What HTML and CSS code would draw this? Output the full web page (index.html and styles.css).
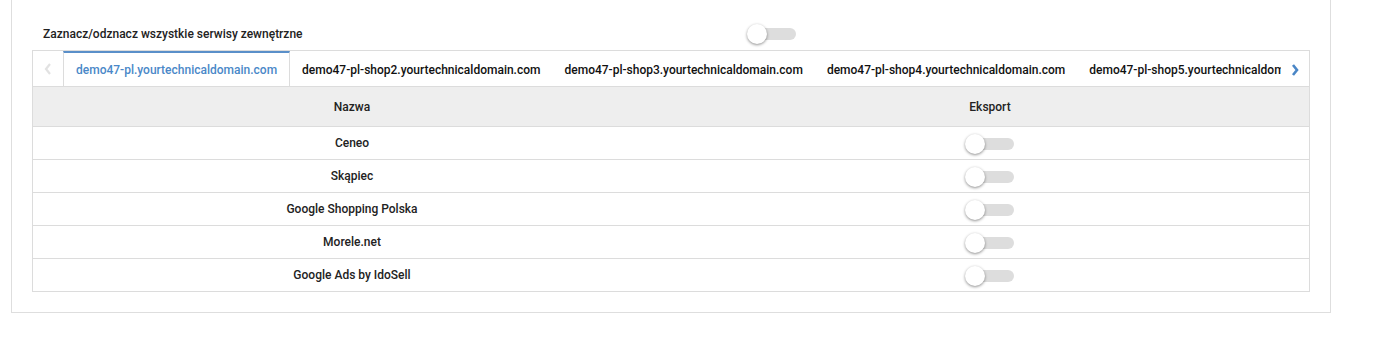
FILE: index.html
```html
<!DOCTYPE html>
<html lang="pl">
<head>
  <meta charset="UTF-8">
  <meta name="viewport" content="width=device-width, initial-scale=1.0">
  <title>Serwisy zewnętrzne</title>
  <link rel="stylesheet" href="styles.css">
</head>
<body>
  <div class="panel">
    <div class="toggleAll">
      <span class="toggleAll-label">Zaznacz/odznacz wszystkie serwisy zewnętrzne</span>
      <span class="switch"><span class="knob"></span></span>
    </div>

    <div class="box">
      <div class="tabs">
        <span class="tabs-arrow tabs-arrow-left">
          <svg width="8" height="12" viewBox="0 0 8 12"><path d="M6 1 L2 6 L6 11" fill="none" stroke="#e2e2e2" stroke-width="2.2"/></svg>
        </span>
        <div class="tabs-list">
          <span class="tab active">demo47-pl.yourtechnicaldomain.com</span>
          <span class="tab">demo47-pl-shop2.yourtechnicaldomain.com</span>
          <span class="tab">demo47-pl-shop3.yourtechnicaldomain.com</span>
          <span class="tab">demo47-pl-shop4.yourtechnicaldomain.com</span>
          <span class="tab">demo47-pl-shop5.yourtechnicaldomain.com</span>
        </div>
        <span class="tabs-arrow tabs-arrow-right">
          <svg width="8" height="12" viewBox="0 0 8 12"><path d="M2 1 L6 6 L2 11" fill="none" stroke="#4a86c6" stroke-width="2.6"/></svg>
        </span>
      </div>

      <table class="services">
        <thead>
          <tr><th>Nazwa</th><th>Eksport</th></tr>
        </thead>
        <tbody>
          <tr><td>Ceneo</td><td><span class="switch"><span class="knob"></span></span></td></tr>
          <tr><td>Skąpiec</td><td><span class="switch"><span class="knob"></span></span></td></tr>
          <tr><td>Google Shopping Polska</td><td><span class="switch"><span class="knob"></span></span></td></tr>
          <tr><td>Morele.net</td><td><span class="switch"><span class="knob"></span></span></td></tr>
          <tr><td>Google Ads by IdoSell</td><td><span class="switch"><span class="knob"></span></span></td></tr>
        </tbody>
      </table>
    </div>
  </div>
</body>
</html>
```

FILE: styles.css
```css
body {
  margin: 0;
  font-family: Roboto, 'Liberation Sans', sans-serif;
  font-size: 12px;
  color: #222;
  background: #fff;
}
.panel {
  box-sizing: border-box;
  margin-left: 11px;
  width: 1320px;
  padding: 24px 20px 20px;
  border: 1px solid #dedede;
  border-top: none;
}
.toggleAll {
  display: flex;
  align-items: center;
  height: 20px;
  margin-bottom: 6px;
  padding-left: 11px;
}
.toggleAll-label {
  font-weight: 500;
  width: 705px;
}
.box {
  border: 1px solid #dcdcdc;
}
.tabs {
  display: flex;
  height: 35px;
  border-bottom: 1px solid #dcdcdc;
}
.tabs-arrow {
  display: flex;
  align-items: center;
  justify-content: center;
  flex: none;
}
.tabs-arrow-left {
  width: 30px;
}
.tabs-arrow-right {
  width: 28px;
  padding-top: 2px;
}
.tabs-list {
  display: flex;
  flex: 1;
  overflow: hidden;
  white-space: nowrap;
}
.tab {
  display: flex;
  align-items: center;
  padding: 0 12px;
  font-weight: 500;
  color: #111;
  border-top: 2px solid transparent;
  box-sizing: border-box;
}
.tab.active {
  color: #4a88c8;
  border-top-color: #5a8fc9;
  border-left: 1px solid #dcdcdc;
  border-right: 1px solid #dcdcdc;
}
.services {
  width: 100%;
  border-collapse: collapse;
  table-layout: fixed;
}
.services th {
  background: #eeeeee;
  height: 39px;
  font-weight: 500;
  color: #222;
  padding: 0;
}
.services td {
  height: 32px;
  padding: 0;
  text-align: center;
  font-weight: 500;
  border-top: 1px solid #dcdcdc;
}
.switch {
  display: inline-block;
  position: relative;
  width: 48px;
  height: 12px;
  border-radius: 6px;
  background: #dddddd;
  vertical-align: middle;
}
.knob {
  position: absolute;
  left: -1px;
  top: -4px;
  width: 20px;
  height: 20px;
  border-radius: 50%;
  background: #fff;
  box-shadow: 0 1px 3px rgba(0,0,0,0.45);
}
```
